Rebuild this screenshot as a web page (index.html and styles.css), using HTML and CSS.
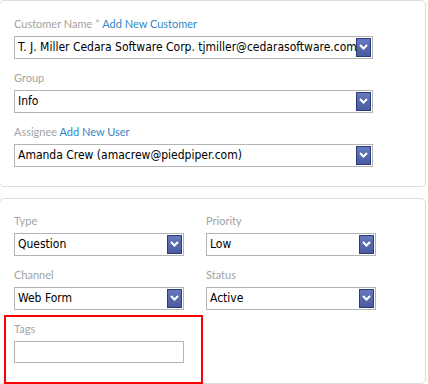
FILE: index.html
```html
<!DOCTYPE html>
<html>
<head>
<meta charset="utf-8">
<link rel="stylesheet" href="styles.css">
</head>
<body>
<div class="card card-top">
  <div class="field">
    <div class="label">Customer Name <span class="req">*</span> <a class="link">Add New Customer</a></div>
    <div class="select wide"><span class="val">T. J. Miller Cedara Software Corp. tjmiller@cedarasoftware.com</span><span class="btn"><svg width="9" height="6" viewBox="0 0 9 6"><path d="M1 1 L4.5 4.5 L8 1" fill="none" stroke="#fff" stroke-width="2"/></svg></span></div>
  </div>
  <div class="field">
    <div class="label">Group</div>
    <div class="select wide"><span class="val">Info</span><span class="btn"><svg width="9" height="6" viewBox="0 0 9 6"><path d="M1 1 L4.5 4.5 L8 1" fill="none" stroke="#fff" stroke-width="2"/></svg></span></div>
  </div>
  <div class="field last">
    <div class="label">Assignee <a class="link">Add New User</a></div>
    <div class="select wide"><span class="val">Amanda Crew (amacrew@piedpiper.com)</span><span class="btn"><svg width="9" height="6" viewBox="0 0 9 6"><path d="M1 1 L4.5 4.5 L8 1" fill="none" stroke="#fff" stroke-width="2"/></svg></span></div>
  </div>
</div>
<div class="card card-bottom">
  <div class="grid">
    <div class="field">
      <div class="label">Type</div>
      <div class="select"><span class="val">Question</span><span class="btn"><svg width="9" height="6" viewBox="0 0 9 6"><path d="M1 1 L4.5 4.5 L8 1" fill="none" stroke="#fff" stroke-width="2"/></svg></span></div>
    </div>
    <div class="field">
      <div class="label">Priority</div>
      <div class="select"><span class="val">Low</span><span class="btn"><svg width="9" height="6" viewBox="0 0 9 6"><path d="M1 1 L4.5 4.5 L8 1" fill="none" stroke="#fff" stroke-width="2"/></svg></span></div>
    </div>
    <div class="field">
      <div class="label">Channel</div>
      <div class="select"><span class="val">Web Form</span><span class="btn"><svg width="9" height="6" viewBox="0 0 9 6"><path d="M1 1 L4.5 4.5 L8 1" fill="none" stroke="#fff" stroke-width="2"/></svg></span></div>
    </div>
    <div class="field">
      <div class="label">Status</div>
      <div class="select"><span class="val">Active</span><span class="btn"><svg width="9" height="6" viewBox="0 0 9 6"><path d="M1 1 L4.5 4.5 L8 1" fill="none" stroke="#fff" stroke-width="2"/></svg></span></div>
    </div>
    <div class="tags">
      <div class="label">Tags</div>
      <div class="input"></div>
    </div>
  </div>
</div>
</body>
</html>
```

FILE: styles.css
```css
* { box-sizing: border-box; }
html, body { margin: 0; padding: 0; background: #fff; }
body {
  font-family: "DejaVu Sans Condensed", "DejaVu Sans", sans-serif;
  font-size: 12px;
  color: #000;
}
.card {
  width: 427px;
  margin-left: -1px;
  border: 1px solid #dcdcdc;
  border-radius: 5px;
  background: #fff;
}
.card-top {
  padding: 15px 0 19px 14px;
}
.card-bottom {
  margin-top: 11px;
  padding: 14px 0 0 14px;
}
.grid {
  display: grid;
  grid-template-columns: 170px 170px;
  column-gap: 22px;
}
.field { margin-bottom: 11px; }
.field.last { margin-bottom: 0; }
.label {
  font-family: "Lato", sans-serif;
  font-size: 11px;
  line-height: 16px;
  height: 16px;
  margin-bottom: 4px;
  color: #a3a3a3;
}
.req { color: #b0b0b0; }
.link { color: #2f87c9; text-decoration: none; }
.select {
  display: flex;
  align-items: center;
  height: 23px;
  border: 1px solid #b4b4b4;
  background: #fff;
  padding-left: 3px;
}
.select.wide { width: 359px; }
.val {
  flex: 1;
  min-width: 0;
  overflow: hidden;
  white-space: nowrap;
  line-height: 21px;
  font-size: 12px;
}
.btn {
  flex: none;
  width: 15px;
  height: 19px;
  margin-right: 1px;
  border: 1px solid #2c3b79;
  background: linear-gradient(#6679bd, #4a5b9f);
  display: flex;
  align-items: center;
  justify-content: center;
  padding-bottom: 2px;
}
.btn svg { display: block; }
.tags {
  grid-column: 1;
  margin: -6px -19px -1px -10px;
  border: 2px solid #f00;
  padding: 4px 17px 19px 8px;
}
.input {
  height: 22px;
  border: 1px solid #b4b4b4;
  background: #fff;
}
```
